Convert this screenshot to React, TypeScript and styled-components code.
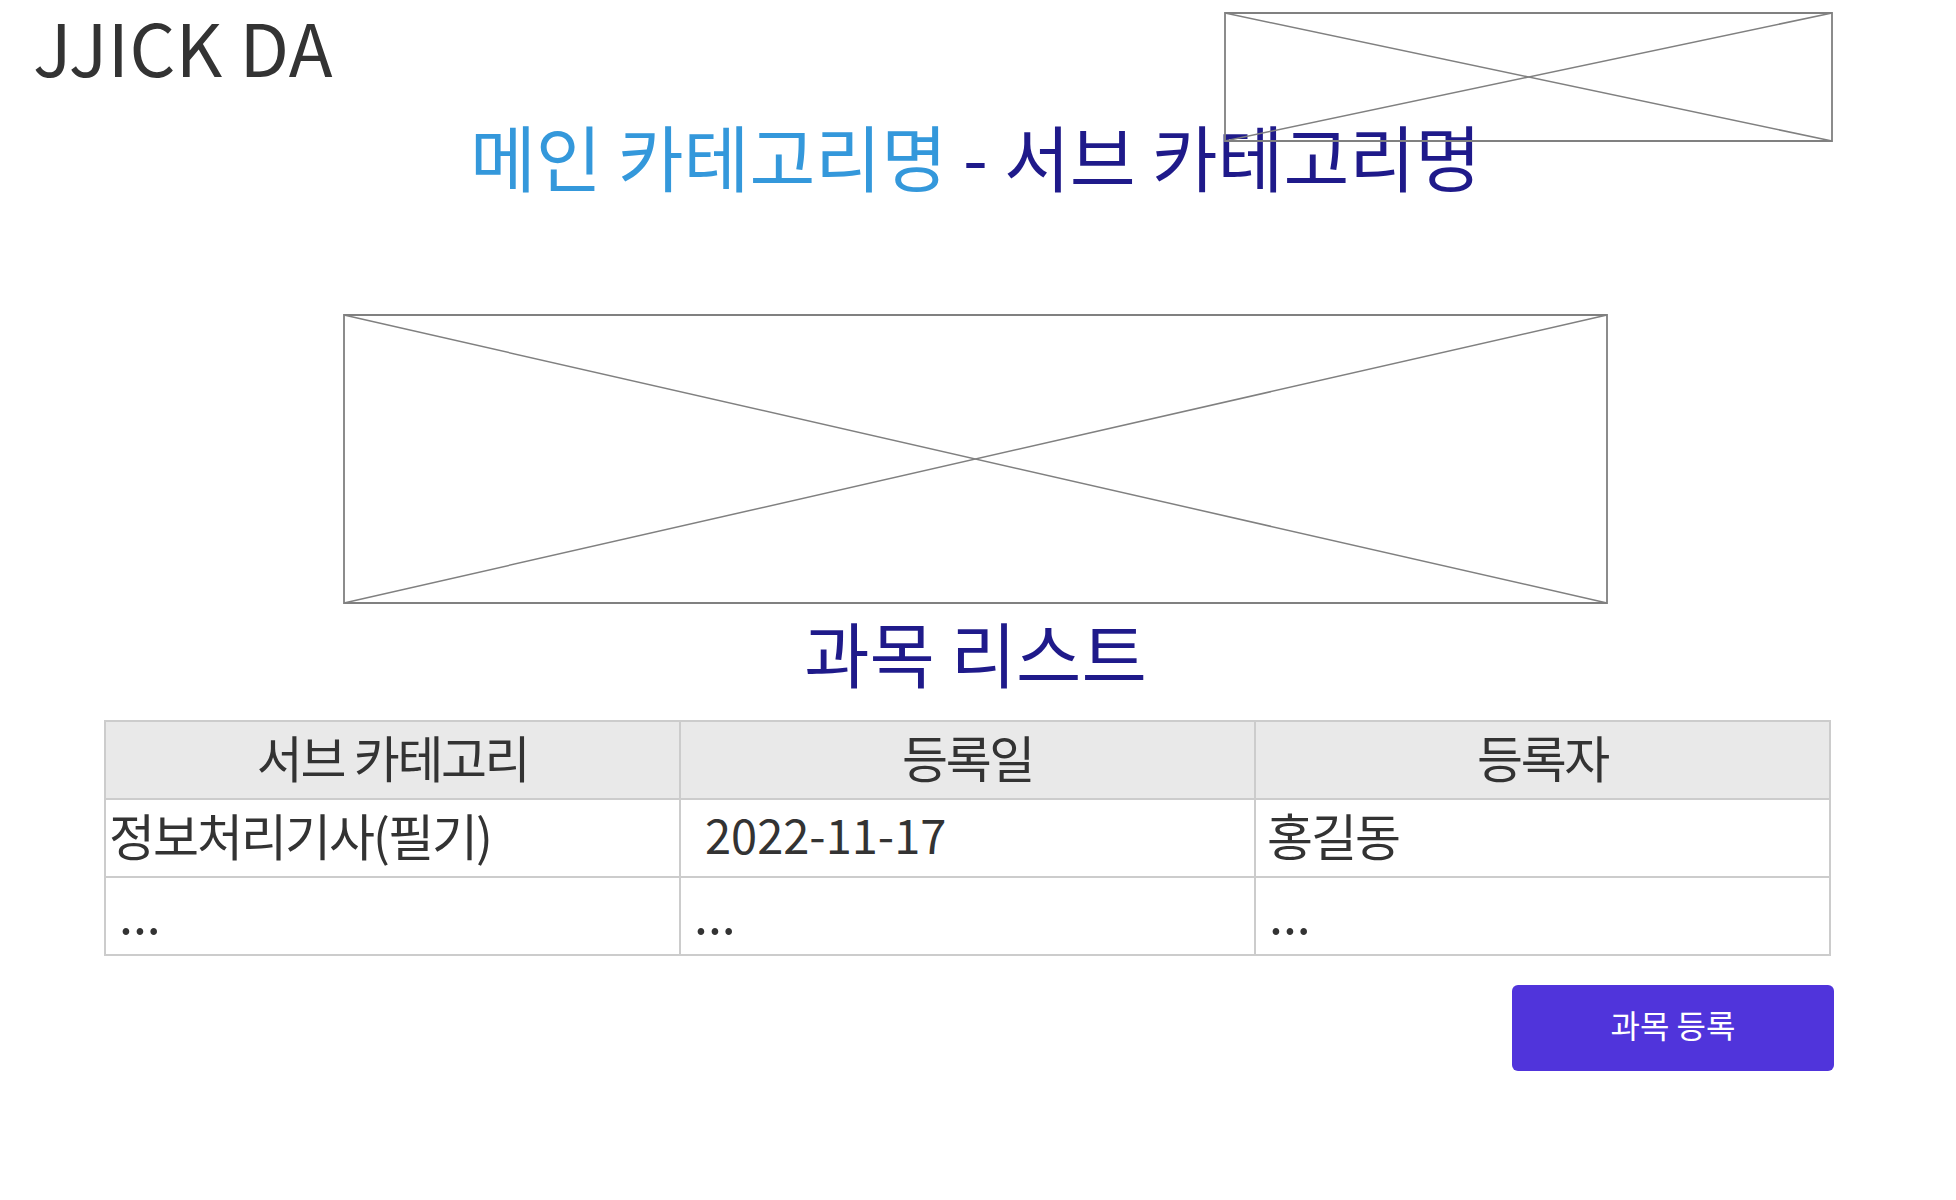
import React from "react";
import styled, { createGlobalStyle } from "styled-components";

const GlobalStyle = createGlobalStyle`
  html, body {
    margin: 0;
    padding: 0;
    background: #ffffff;
  }
  body {
    font-family: "Noto Sans CJK KR", "Noto Sans", sans-serif;
    color: #333333;
  }
  * { box-sizing: border-box; }
`;

const Page = styled.div`
  position: relative;
  width: 1956px;
  min-height: 1200px;
  padding-right: 5px;
  display: flex;
  flex-direction: column;
`;

const Header = styled.header`
  display: flex;
  align-items: flex-start;
  padding: 3px 0 0 33px;
`;

const Logo = styled.div`
  font-size: 72px;
  line-height: 86px;
  font-weight: 400;
  color: #333333;
  letter-spacing: 0.5px;
  white-space: nowrap;
`;

const Frame = styled.div<{ $w: number; $h: number }>`
  width: ${(p) => p.$w}px;
  height: ${(p) => p.$h}px;
  flex: none;
  svg {
    display: block;
    width: 100%;
    height: 100%;
    overflow: visible;
  }
`;

const TopBanner = styled(Frame)`
  position: absolute;
  top: 13px;
  left: 1225px;
  z-index: 2;
`;

const Hero = styled(Frame)`
  align-self: center;
  margin-top: 124px;
`;

const Title = styled.h1`
  margin: 30px 0 0;
  text-align: center;
  font-size: 71.6px;
  line-height: 72px;
  font-weight: 400;
  color: #1f1a8a;
  white-space: nowrap;
`;

const MainCat = styled.span`
  color: #3498db;
`;

const SectionTitle = styled.h2`
  margin: 13px 0 0;
  text-align: center;
  font-size: 71px;
  line-height: 71px;
  font-weight: 400;
  color: #1f1a8a;
`;

const Content = styled.section`
  margin-left: 104px;
  width: 1727px;
  display: flex;
  flex-direction: column;
`;

const Table = styled.div`
  margin-top: 33px;
  display: grid;
  grid-template-columns: repeat(3, 1fr);
  border-top: 2px solid #cccccc;
  border-left: 2px solid #cccccc;
`;

const Cell = styled.div<{ $head?: boolean; $indent?: number; $size?: number; $latin?: boolean }>`
  height: 78px;
  display: flex;
  align-items: center;
  justify-content: ${(p) => (p.$head ? "center" : "flex-start")};
  padding: 0 0 8px ${(p) => (p.$head ? 0 : p.$indent ?? 0)}px;
  border-right: 2px solid #cccccc;
  border-bottom: 2px solid #cccccc;
  background: ${(p) => (p.$head ? "#e9e9e9" : "#ffffff")};
  font-size: ${(p) => p.$size ?? 50}px;
  line-height: 50px;
  color: #333333;
  white-space: nowrap;
  letter-spacing: ${(p) => (p.$latin ? "0" : p.$head ? "-2.4px" : "-2px")};
  word-spacing: ${(p) => (p.$head ? "1px" : "3px")};
`;

const ButtonRow = styled.div`
  display: flex;
  justify-content: flex-end;
  margin: 29px -3px 0 0;
`;

const PrimaryButton = styled.button`
  width: 322px;
  height: 86px;
  padding: 0 0 8px;
  border: none;
  border-radius: 6px;
  background: #5034db;
  color: #ffffff;
  font-family: "Noto Sans CJK KR", "Noto Sans", sans-serif;
  font-size: 32px;
  font-weight: 400;
  cursor: pointer;
`;

const PlaceholderArt = () => (
  <svg viewBox="0 0 100 100" preserveAspectRatio="none">
    <rect x="0" y="0" width="100" height="100" fill="none" stroke="#808080" strokeWidth="1.8" vectorEffect="non-scaling-stroke" />
    <line x1="0" y1="0" x2="100" y2="100" stroke="#808080" strokeWidth="1.5" vectorEffect="non-scaling-stroke" />
    <line x1="100" y1="0" x2="0" y2="100" stroke="#808080" strokeWidth="1.5" vectorEffect="non-scaling-stroke" />
  </svg>
);

const headers = ["서브 카테고리", "등록일", "등록자"];

export default function App() {
  return (
    <>
      <GlobalStyle />
      <Page>
        <Header>
          <Logo>JJICK DA</Logo>
        </Header>
        <TopBanner $w={607} $h={128}>
          <PlaceholderArt />
        </TopBanner>
        <Title>
          <MainCat>메인 카테고리명</MainCat> - 서브 카테고리명
        </Title>
        <Hero $w={1263} $h={288}>
          <PlaceholderArt />
        </Hero>
        <SectionTitle>과목 리스트</SectionTitle>
        <Content>
          <Table>
            {headers.map((h) => (
              <Cell key={h} $head>
                {h}
              </Cell>
            ))}
            <Cell $indent={3}>정보처리기사(필기)</Cell>
            <Cell $indent={24} $size={47} $latin>2022-11-17</Cell>
            <Cell $indent={11}>홍길동</Cell>
            <Cell $indent={13} $latin>...</Cell>
            <Cell $indent={13} $latin>...</Cell>
            <Cell $indent={13} $latin>...</Cell>
          </Table>
          <ButtonRow>
            <PrimaryButton>과목 등록</PrimaryButton>
          </ButtonRow>
        </Content>
      </Page>
    </>
  );
}
